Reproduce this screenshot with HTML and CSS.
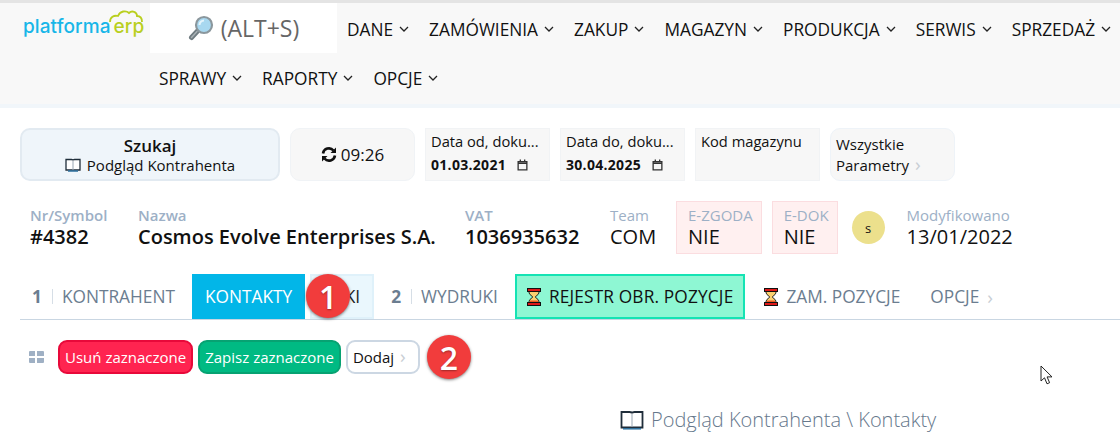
FILE: index.html
```html
<!DOCTYPE html>
<html lang="pl">
<head>
  <meta charset="UTF-8">
  <title>Podgląd Kontrahenta</title>
  <link rel="stylesheet" href="styles.css">
</head>
<body>

  <header class="top-bar">
    <div class="logo">
      <svg class="logo-cloud" width="34" height="13" viewBox="0 0 34 13">
        <path d="M1 12 C1 7 5 5 9 6 C11 1 17 0 20 3 C23 0 28 2 28 6 C31 6 33 8 33 12" fill="none" stroke="#b9cf1f" stroke-width="1.800"/>
      </svg>
      <span class="logo-blue">platforma</span><span class="logo-green">erp</span>
    </div>
    <nav class="main-nav">
      <div class="search-box">
        <svg width="26" height="26" viewBox="0 0 26 26">
          <line x1="3.500" y1="22.500" x2="10" y2="15.500" stroke="#6f7b80" stroke-width="5" stroke-linecap="round"/>
          <line x1="3.500" y1="22.500" x2="9" y2="16.500" stroke="#a9b1b5" stroke-width="1.500" stroke-linecap="round"/>
          <circle cx="16" cy="10" r="8" fill="#a8d8f0" stroke="#8b979d" stroke-width="2.200"/>
          <path d="M11.500 10a4.500 4.500 0 0 1 4.500-4.500" fill="none" stroke="#e4f4fc" stroke-width="2"/>
        </svg>
        <span>(ALT+S)</span>
      </div>
      <a class="nav-item">DANE <svg class="chev" viewBox="0 0 10 6"><path d="M1 1l4 4 4-4"/></svg></a>
      <a class="nav-item">ZAMÓWIENIA <svg class="chev" viewBox="0 0 10 6"><path d="M1 1l4 4 4-4"/></svg></a>
      <a class="nav-item">ZAKUP <svg class="chev" viewBox="0 0 10 6"><path d="M1 1l4 4 4-4"/></svg></a>
      <a class="nav-item">MAGAZYN <svg class="chev" viewBox="0 0 10 6"><path d="M1 1l4 4 4-4"/></svg></a>
      <a class="nav-item">PRODUKCJA <svg class="chev" viewBox="0 0 10 6"><path d="M1 1l4 4 4-4"/></svg></a>
      <a class="nav-item">SERWIS <svg class="chev" viewBox="0 0 10 6"><path d="M1 1l4 4 4-4"/></svg></a>
      <a class="nav-item">SPRZEDAŻ <svg class="chev" viewBox="0 0 10 6"><path d="M1 1l4 4 4-4"/></svg></a>
      <div class="nav-break"></div>
      <a class="nav-item nav-low">SPRAWY <svg class="chev" viewBox="0 0 10 6"><path d="M1 1l4 4 4-4"/></svg></a>
      <a class="nav-item nav-low">RAPORTY <svg class="chev" viewBox="0 0 10 6"><path d="M1 1l4 4 4-4"/></svg></a>
      <a class="nav-item nav-low">OPCJE <svg class="chev" viewBox="0 0 10 6"><path d="M1 1l4 4 4-4"/></svg></a>
    </nav>
  </header>

  <main class="content">
    <section class="filters">
      <button class="btn-search">
        <strong>Szukaj</strong>
        <span class="btn-sub">
          <svg class="book" width="16" height="14" viewBox="0 0 16 14"><path d="M1 1.500h5.500c.8 0 1.500.4 1.500 1 0-.6.7-1 1.500-1H15v10.500H1z" fill="#fff" stroke="#1f2d3a" stroke-width="1.300"/><path d="M8 2.500v9.500" stroke="#9aa7b4"/><path d="M3 13h10" stroke="#2b6f9e" stroke-width="1.500"/></svg>
          Podgląd Kontrahenta
        </span>
      </button>
      <button class="btn-refresh">
        <svg width="16" height="15" viewBox="0 0 16 15"><path d="M2 6.500A6 6 0 0 1 12.500 3.500" fill="none" stroke="#111" stroke-width="2.600"/><path d="M15 0.500v5.500h-5.500z" fill="#111"/><path d="M14 8.500A6 6 0 0 1 3.500 11.500" fill="none" stroke="#111" stroke-width="2.600"/><path d="M1 14.500V9h5.500z" fill="#111"/></svg>
        09:26
      </button>
      <div class="field">
        <label>Data od, doku...</label>
        <div class="field-date">01.03.2021 <svg class="cal" viewBox="0 0 10 11"><path d="M1 2.500h8v7.500H1zM1 4h8M3 .5v2M7 .5v2" fill="none" stroke="#333" stroke-width="1.200"/></svg></div>
      </div>
      <div class="field">
        <label>Data do, doku...</label>
        <div class="field-date">30.04.2025 <svg class="cal" viewBox="0 0 10 11"><path d="M1 2.500h8v7.500H1zM1 4h8M3 .5v2M7 .5v2" fill="none" stroke="#333" stroke-width="1.200"/></svg></div>
      </div>
      <div class="field">
        <label>Kod magazynu</label>
      </div>
      <button class="btn-params">Wszystkie<br>Parametry <span class="arrow">›</span></button>
    </section>

    <section class="summary">
      <div class="info info-symbol"><span class="info-label">Nr/Symbol</span><b>#4382</b></div>
      <div class="info info-name"><span class="info-label">Nazwa</span><b>Cosmos Evolve Enterprises S.A.</b></div>
      <div class="info info-vat"><span class="info-label">VAT</span><b>1036935632</b></div>
      <div class="info info-team"><span class="info-label">Team</span>COM</div>
      <div class="info info-flag"><span class="info-label">E-ZGODA</span>NIE</div>
      <div class="info info-flag"><span class="info-label">E-DOK</span>NIE</div>
      <div class="avatar">s</div>
      <div class="info"><span class="info-label">Modyfikowano</span>13/01/2022</div>
    </section>

    <section class="tabs">
      <a class="tab tab-first"><span class="tab-num">1</span><span class="tab-sep"></span>KONTRAHENT</a>
      <a class="tab tab-active">KONTAKTY</a>
      <a class="tab tab-light">KI<span class="badge badge-one">1</span></a>
      <a class="tab"><span class="tab-num">2</span><span class="tab-sep"></span>WYDRUKI</a>
      <a class="tab tab-mint">
        <svg class="hourglass" width="14" height="18" viewBox="0 0 14 18"><path d="M2 3.500h10c0 4-3.500 4-3.500 5.500s3.500 1.500 3.500 5.500H2c0-4 3.500-4 3.500-5.500S2 7.500 2 3.500z" fill="#fbd070" stroke="#111"/><path d="M3.200 12.500h7.600l.5 1.700H2.700z" fill="#ee5a24"/><rect x=".5" y=".5" width="13" height="3" fill="#e01818" stroke="#111"/><rect x=".5" y="14.500" width="13" height="3" fill="#e01818" stroke="#111"/></svg>
        REJESTR OBR. POZYCJE
      </a>
      <a class="tab tab-plain">
        <svg class="hourglass" width="14" height="18" viewBox="0 0 14 18"><path d="M2 3.500h10c0 4-3.500 4-3.500 5.500s3.500 1.500 3.500 5.500H2c0-4 3.500-4 3.500-5.500S2 7.500 2 3.500z" fill="#fbd070" stroke="#111"/><path d="M3.200 12.500h7.600l.5 1.700H2.700z" fill="#ee5a24"/><rect x=".5" y=".5" width="13" height="3" fill="#e01818" stroke="#111"/><rect x=".5" y="14.500" width="13" height="3" fill="#e01818" stroke="#111"/></svg>
        ZAM. POZYCJE
      </a>
      <a class="tab tab-plain">OPCJE <span class="arrow arrow-tab">›</span></a>
    </section>

    <section class="toolbar">
      <svg class="grid-icon" width="15" height="12" viewBox="0 0 15 12"><path d="M0 1a1 1 0 0 1 1-1h5v5H0zM8 0h6a1 1 0 0 1 1 1v4H8zM0 7h6v5H1a1 1 0 0 1-1-1zM8 7h7v4a1 1 0 0 1-1 1H8z" fill="#9fb0c4"/></svg>
      <button class="btn btn-red">Usuń zaznaczone</button>
      <button class="btn btn-green">Zapisz zaznaczone</button>
      <button class="btn btn-white">Dodaj <span class="arrow">›</span></button>
      <span class="badge badge-two">2</span>
    </section>

    <h1 class="page-title">
      <svg width="24" height="20" viewBox="0 0 24 20"><path d="M1.500 2h8c1.200 0 2.500.6 2.500 1.500C12 2.600 13.300 2 14.500 2h8v15.500h-21z" fill="#fff" stroke="#1f2d3a" stroke-width="1.800"/><path d="M12 4v13" stroke="#9aa7b4"/><path d="M3 18.800h18" stroke="#2b6f9e" stroke-width="1.500"/></svg>
      Podgląd Kontrahenta \ Kontakty
    </h1>
  </main>

  <svg class="cursor" width="14" height="21" viewBox="0 0 14 21"><path d="M1 1v15l3.500-3.200 2.500 6 2.600-1.100-2.500-5.800H12z" fill="#fff" stroke="#222" stroke-width="1"/></svg>

</body>
</html>
```

FILE: styles.css
```css
* {
  box-sizing: border-box;
}

body {
  margin: 0;
  height: 440px;
  overflow: hidden;
  position: relative;
  background: #fff;
  color: #111;
  font-family: "Open Sans", Arial, sans-serif;
}

button {
  font-family: inherit;
  color: inherit;
}

/* header */
.top-bar {
  display: flex;
  height: 108px;
  padding-top: 3px;
  background: #f8f8f8;
  border-top: 3px solid #e4e4e4;
  border-bottom: 4px solid #f1f6fa;
}

.logo {
  position: relative;
  width: 150px;
  padding: 9px 0 0 23px;
  font-family: "Inter", sans-serif;
  font-size: 19px;
  font-weight: 500;
  letter-spacing: 0.100px;
}

.logo-cloud {
  position: absolute;
  left: 109px;
  top: 4px;
}

.logo-blue {
  color: #17b6e8;
}

.logo-green {
  color: #b9cf1f;
  margin-left: 3px;
}

.main-nav {
  flex: 1;
  display: flex;
  flex-wrap: wrap;
  align-content: flex-start;
}

.search-box {
  width: 187px;
  height: 50px;
  display: flex;
  align-items: center;
  justify-content: center;
  gap: 7px;
  background: #fff;
  color: #666;
  font-size: 23px;
  margin-top: -3px;
}

.nav-item {
  display: flex;
  align-items: center;
  height: 46px;
  margin-left: 20px;
  font-size: 17.300px;
  white-space: nowrap;
}

.search-box + .nav-item {
  margin-left: 10px;
}

.nav-break {
  width: 100%;
  height: 0;
}

.nav-break + .nav-item {
  margin-left: 9px;
}

.nav-low {
  height: 50px;
}

.chev {
  width: 10px;
  height: 6px;
  margin-left: 6px;
  fill: none;
  stroke: #222;
  stroke-width: 1.300;
}

/* content */
.content {
  padding: 20px 0 0 20px;
}

.filters {
  display: flex;
  align-items: stretch;
  height: 53px;
}

.btn-search {
  width: 260px;
  display: flex;
  flex-direction: column;
  align-items: center;
  justify-content: center;
  background: #eff5fa;
  border: 2px solid #e2eaf1;
  border-radius: 10px;
  padding: 0;
}

.btn-search strong {
  font-size: 17px;
  font-weight: 600;
  line-height: 21px;
}

.btn-sub {
  display: flex;
  align-items: center;
  gap: 6px;
  font-size: 15px;
  line-height: 19px;
}

.btn-refresh {
  width: 125px;
  margin-left: 10px;
  display: flex;
  align-items: center;
  justify-content: center;
  gap: 4px;
  background: #f7f7f7;
  border: 1px solid #f0f3f6;
  border-radius: 10px;
  font-size: 17px;
  padding: 0;
}

.field {
  width: 125px;
  margin-left: 10px;
  padding: 0 5px;
  background: #f7f7f7;
  border: 1px solid #f1f3f5;
  font-size: 14.700px;
  white-space: nowrap;
}

.field label {
  display: block;
  line-height: 25px;
}

.field-date {
  display: flex;
  align-items: center;
  gap: 11px;
  font-size: 14px;
  font-weight: 700;
  letter-spacing: 0.300px;
  line-height: 21px;
}

.cal {
  width: 11px;
  height: 12px;
}

.btn-params {
  width: 125px;
  margin-left: 10px;
  padding: 0 0 0 5px;
  text-align: left;
  background: #f7f7f7;
  border: 1px solid #eef3f8;
  border-radius: 10px;
  font-size: 15px;
  line-height: 21px;
}

.arrow {
  color: #c8ced4;
  font-size: 19px;
  line-height: 0;
  margin-left: 2px;
}

/* summary */
.summary {
  display: flex;
  align-items: center;
  margin-top: 20px;
  padding-left: 10px;
  height: 53px;
}

.info {
  display: flex;
  flex-direction: column;
  padding-bottom: 2px;
  font-size: 20px;
  line-height: 24px;
  white-space: nowrap;
}

.info b {
  font-weight: 600;
}

.info-label {
  color: #9db0c6;
  font-size: 15px;
  line-height: 20px;
}

.info-symbol .info-label,
.info-name .info-label,
.info-vat .info-label {
  font-weight: 600;
}

.info-symbol {
  width: 108px;
}

.info-name {
  width: 327px;
}

.info-vat {
  width: 145px;
}

.info-team {
  width: 66px;
}

.info-flag {
  height: 53px;
  justify-content: center;
  margin-right: 10px;
  padding: 0 8px 2px 11px;
  background: #fff0f0;
  border: 1px solid #fbdde0;
}

.avatar {
  width: 33px;
  height: 33px;
  margin: 0 22px 0 4px;
  display: flex;
  align-items: center;
  justify-content: center;
  border-radius: 50%;
  background: #ece08c;
  font-size: 13px;
}

/* tabs */
.tabs {
  display: flex;
  height: 46px;
  margin-top: 20px;
  border-bottom: 1px solid #c9d6e2;
  font-size: 17.300px;
}

.tab {
  display: flex;
  align-items: center;
  padding: 0 11px;
  color: #6b7d90;
  white-space: nowrap;
}

.tab-first {
  margin-left: 1px;
}

.tab-num {
  font-weight: 700;
}

.tab-sep {
  width: 1px;
  height: 15px;
  margin: 0 9px 0 10px;
  background: #d6dee6;
}

.tab-active {
  margin-left: 6px;
  padding: 0 13px;
  background: #02b6e8;
  color: #fff;
}

.tab-light {
  position: relative;
  width: 64px;
  margin-left: 5px;
  margin-right: 6px;
  padding: 0 12px;
  justify-content: flex-end;
  background: #eaf7fd;
  border: 2px solid #dff1fa;
  color: #222;
}

.tab-mint {
  gap: 8px;
  margin-left: 6px;
  padding: 0 10px;
  background: #8ef7d3;
  border: 2px solid #15e3b4;
  color: #111;
  letter-spacing: 0.150px;
}

.tab-plain {
  gap: 8px;
  margin-left: 13px;
  padding: 0 6px;
}

.tab-plain + .tab-plain {
  margin-left: 18px;
}

.arrow-tab {
  margin-left: 0;
}

/* toolbar */
.toolbar {
  position: relative;
  display: flex;
  align-items: center;
  gap: 5px;
  height: 34px;
  margin-top: 20px;
  padding-left: 9px;
}

.grid-icon {
  margin-right: 9px;
}

.btn {
  height: 34px;
  padding: 0 5px;
  border-radius: 9px;
  font-size: 15px;
  white-space: nowrap;
}

.btn-red {
  background: #ff2450;
  border: 2px solid #e8093a;
  color: #fff;
}

.btn-green {
  background: #00ba83;
  border: 2px solid #07a272;
  color: #fff;
}

.btn-white {
  width: 74px;
  text-align: left;
  background: #fff;
  border: 2px solid #ccd7e3;
}

/* numbered callouts over the page */
.badge {
  position: absolute;
  width: 44px;
  height: 44px;
  display: flex;
  align-items: center;
  justify-content: center;
  border-radius: 50%;
  background: #f13c3c;
  box-shadow: 0 1px 3px rgba(0, 0, 0, 0.5);
  color: #fff;
  font-family: "Open Sans", Arial, sans-serif;
  font-size: 32px;
  font-weight: 600;
  letter-spacing: 0;
  text-shadow: 0 1px 2px rgba(0, 0, 0, 0.35);
}

.badge-one {
  left: -6px;
  top: -2px;
}

.badge-two {
  left: 407px;
  top: -5px;
}

.page-title {
  display: flex;
  align-items: center;
  gap: 7px;
  margin: 32px 0 0 600px;
  color: #66788c;
  font-size: 20px;
  font-weight: 300;
  white-space: nowrap;
}

.cursor {
  position: absolute;
  left: 1040px;
  top: 365px;
}
```
